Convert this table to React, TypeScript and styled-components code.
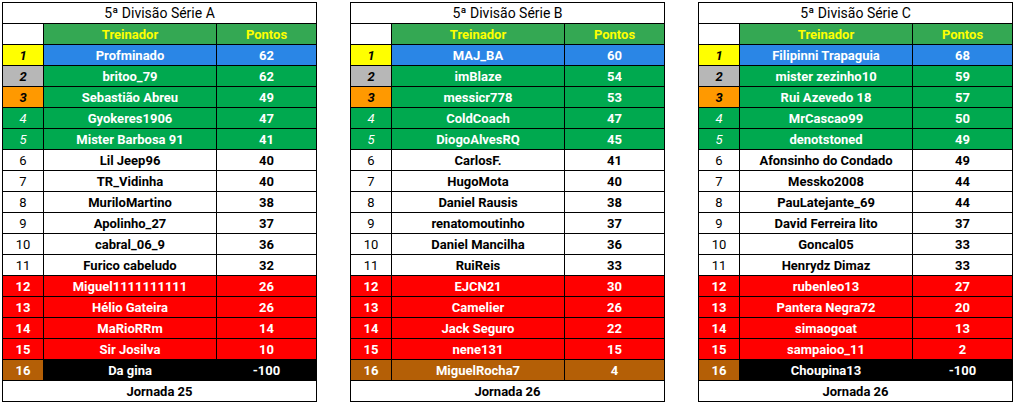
import React from 'react';
import styled, { createGlobalStyle } from 'styled-components';

const GlobalStyle = createGlobalStyle`
  html, body {
    margin: 0;
    padding: 0;
    background: #ffffff;
  }
  body {
    font-family: Roboto, "Liberation Sans", Arial, sans-serif;
  }
`;

const Page = styled.div`
  display: flex;
  gap: 33px;
  padding: 2px;
`;

const Table = styled.div`
  display: grid;
  grid-template-columns: 40px 172px 99px;
  grid-auto-rows: 20px;
  gap: 1px;
  padding: 1px;
  background: #000000;
`;

const Cell = styled.div<{ $bg: string; $color?: string; $bold?: boolean; $italic?: boolean }>`
  display: flex;
  align-items: center;
  justify-content: center;
  background: ${(p) => p.$bg};
  color: ${(p) => p.$color || '#000000'};
  font-size: 13px;
  font-weight: ${(p) => (p.$bold ? 700 : 400)};
  font-style: ${(p) => (p.$italic ? 'italic' : 'normal')};
  white-space: nowrap;
`;

const Title = styled.div`
  grid-column: 1 / -1;
  display: flex;
  align-items: center;
  justify-content: center;
  background: #ffffff;
  color: #000000;
  font-size: 14px;
`;

const Footer = styled(Title)`
  font-size: 13px;
  font-weight: 700;
`;

const HeadCell = styled.div`
  display: flex;
  align-items: center;
  justify-content: center;
  background: #34a853;
  color: #ffff00;
  font-size: 13px;
  font-weight: 700;
`;

const Blank = styled.div`
  background: #ffffff;
`;

const GREEN = '#00a94f';
const BLUE = '#2a86e6';
const RED = '#ff0000';
const BROWN = '#b45f06';

type Row = [string, string];

interface Division {
  title: string;
  footer: string;
  lastAllBrown: boolean;
  rows: Row[];
}

const divisions: Division[] = [
  {
    title: '5ª Divisão Série A',
    footer: 'Jornada 25',
    lastAllBrown: false,
    rows: [
      ['Profminado', '62'],
      ['britoo_79', '62'],
      ['Sebastião Abreu', '49'],
      ['Gyokeres1906', '47'],
      ['Mister Barbosa 91', '41'],
      ['Lil Jeep96', '40'],
      ['TR_Vidinha', '40'],
      ['MuriloMartino', '38'],
      ['Apolinho_27', '37'],
      ['cabral_06_9', '36'],
      ['Furico cabeludo', '32'],
      ['Miguel1111111111', '26'],
      ['Hélio Gateira', '26'],
      ['MaRioRRm', '14'],
      ['Sir Josilva', '10'],
      ['Da gina', '-100'],
    ],
  },
  {
    title: '5ª Divisão Série B',
    footer: 'Jornada 26',
    lastAllBrown: true,
    rows: [
      ['MAJ_BA', '60'],
      ['imBlaze', '54'],
      ['messicr778', '53'],
      ['ColdCoach', '47'],
      ['DiogoAlvesRQ', '45'],
      ['CarlosF.', '41'],
      ['HugoMota', '40'],
      ['Daniel Rausis', '38'],
      ['renatomoutinho', '37'],
      ['Daniel Mancilha', '36'],
      ['RuiReis', '33'],
      ['EJCN21', '30'],
      ['Camelier', '26'],
      ['Jack Seguro', '22'],
      ['nene131', '15'],
      ['MiguelRocha7', '4'],
    ],
  },
  {
    title: '5ª Divisão Série C',
    footer: 'Jornada 26',
    lastAllBrown: false,
    rows: [
      ['Filipinni Trapaguia', '68'],
      ['mister zezinho10', '59'],
      ['Rui Azevedo 18', '57'],
      ['MrCascao99', '50'],
      ['denotstoned', '49'],
      ['Afonsinho do Condado', '49'],
      ['Messko2008', '44'],
      ['PauLatejante_69', '44'],
      ['David Ferreira lito', '37'],
      ['Goncal05', '33'],
      ['Henrydz Dimaz', '33'],
      ['rubenleo13', '27'],
      ['Pantera Negra72', '20'],
      ['simaogoat', '13'],
      ['sampaioo_11', '2'],
      ['Choupina13', '-100'],
    ],
  },
];

// cor da posição (1ª coluna)
function rankStyle(pos: number) {
  if (pos === 1) return { bg: '#ffff00', color: '#000', bold: true, italic: true };
  if (pos === 2) return { bg: '#b7b7b7', color: '#000', bold: true, italic: true };
  if (pos === 3) return { bg: '#ff9900', color: '#000', bold: true, italic: true };
  if (pos <= 5) return { bg: GREEN, color: '#fff', bold: false, italic: true };
  if (pos <= 11) return { bg: '#ffffff', color: '#000', bold: false, italic: false };
  if (pos <= 15) return { bg: RED, color: '#fff', bold: true, italic: false };
  return { bg: BROWN, color: '#fff', bold: true, italic: false };
}

function rowStyle(pos: number, lastAllBrown: boolean) {
  if (pos === 1) return { bg: BLUE, color: '#fff' };
  if (pos <= 5) return { bg: GREEN, color: '#fff' };
  if (pos <= 11) return { bg: '#ffffff', color: '#000' };
  if (pos <= 15) return { bg: RED, color: '#fff' };
  return { bg: lastAllBrown ? BROWN : '#000000', color: '#fff' };
}

const Standings = ({ division }: { division: Division }) => (
  <Table>
    <Title>{division.title}</Title>
    <Blank />
    <HeadCell>Treinador</HeadCell>
    <HeadCell>Pontos</HeadCell>
    {division.rows.map(([name, pts], i) => {
      const pos = i + 1;
      const r = rankStyle(pos);
      const s = rowStyle(pos, division.lastAllBrown);
      return (
        <React.Fragment key={pos}>
          <Cell $bg={r.bg} $color={r.color} $bold={r.bold} $italic={r.italic}>
            {pos}
          </Cell>
          <Cell $bg={s.bg} $color={s.color} $bold>
            {name}
          </Cell>
          <Cell $bg={s.bg} $color={s.color} $bold>
            {pts}
          </Cell>
        </React.Fragment>
      );
    })}
    <Footer>{division.footer}</Footer>
  </Table>
);

export default function App() {
  return (
    <>
      <GlobalStyle />
      <Page>
        {divisions.map((d) => (
          <Standings key={d.title} division={d} />
        ))}
      </Page>
    </>
  );
}
